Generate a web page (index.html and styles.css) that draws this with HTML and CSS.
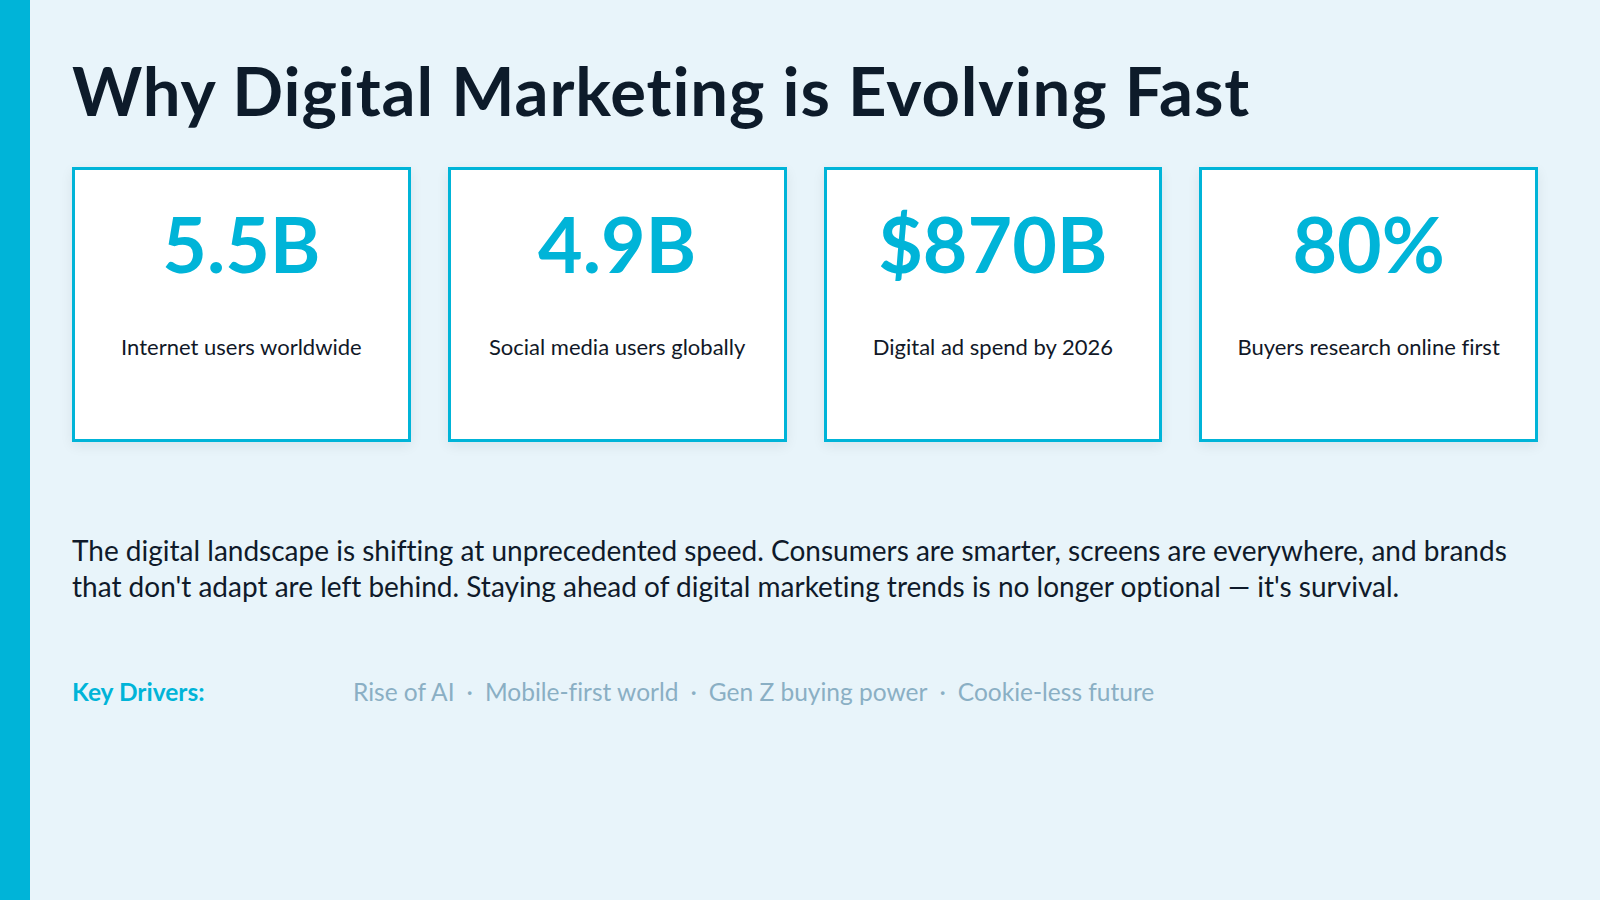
FILE: index.html
```html
<!DOCTYPE html>
<html lang="en">
<head>
<meta charset="utf-8">
<title>Why Digital Marketing is Evolving Fast</title>
<link rel="stylesheet" href="styles.css">
</head>
<body>
<div class="slide">
  <div class="accent-bar"></div>
  <main class="content">
    <h1 class="title">Why Digital Marketing is Evolving Fast</h1>
    <section class="stats">
      <div class="card">
        <div class="stat-value">5.5B</div>
        <div class="stat-label">Internet users worldwide</div>
      </div>
      <div class="card">
        <div class="stat-value">4.9B</div>
        <div class="stat-label">Social media users globally</div>
      </div>
      <div class="card">
        <div class="stat-value">$870B</div>
        <div class="stat-label">Digital ad spend by 2026</div>
      </div>
      <div class="card">
        <div class="stat-value">80%</div>
        <div class="stat-label">Buyers research online first</div>
      </div>
    </section>
    <p class="intro">The digital landscape is shifting at unprecedented speed. Consumers are smarter, screens are everywhere, and brands that don't adapt are left behind. Staying ahead of digital marketing trends is no longer optional — it's survival.</p>
    <div class="drivers">
      <span class="drivers-label">Key Drivers:</span>
      <span class="drivers-list">
        <span class="driver">Rise of AI</span><span class="sep">·</span><span class="driver">Mobile-first world</span><span class="sep">·</span><span class="driver">Gen Z buying power</span><span class="sep">·</span><span class="driver">Cookie-less future</span>
      </span>
    </div>
  </main>
</div>
</body>
</html>
```
FILE: styles.css
```css
html, body {
  margin: 0;
  padding: 0;
}
body {
  background: #e8f4fa;
  font-family: "Lato", "Liberation Sans", sans-serif;
  color: #0f1a2a;
  font-variant-ligatures: none;
}
.slide {
  display: flex;
  width: 1600px;
  height: 900px;
  background: #e8f4fa;
  overflow: hidden;
}
.accent-bar {
  flex: 0 0 30px;
  background: #00b4d8;
}
.content {
  flex: 1;
  padding: 51px 62px 0 42px;
}
.title {
  margin: 0;
  font-size: 67px;
  line-height: 79px;
  font-weight: 700;
  color: #0d1b2a;
  letter-spacing: 0.9px;
}
.stats {
  margin-top: 37px;
  display: grid;
  grid-template-columns: repeat(4, 1fr);
  gap: 37px;
}
.card {
  height: 275px;
  box-sizing: border-box;
  background: #ffffff;
  border: 3px solid #00b4d8;
  box-shadow: 0 4px 12px rgba(13, 27, 42, 0.07);
  padding-top: 34px;
  text-align: center;
}
.stat-value {
  font-size: 77px;
  line-height: 78px;
  font-weight: 700;
  color: #00b4d8;
}
.stat-label {
  margin-top: 52px;
  font-size: 22px;
  line-height: 26px;
  color: #111827;
}
.intro {
  margin: 90px 0 0;
  font-size: 28px;
  line-height: 36px;
  letter-spacing: 0;
  color: #0f1a2a;
}
.drivers {
  margin-top: 73px;
  display: flex;
  align-items: baseline;
  font-size: 24.5px;
  line-height: 30px;
}
.drivers-label {
  flex: 0 0 281px;
  font-weight: 700;
  color: #00b4d8;
}
.drivers-list {
  display: flex;
  align-items: baseline;
  color: #8aafc4;
}
.sep {
  margin: 0 12px;
}
```
